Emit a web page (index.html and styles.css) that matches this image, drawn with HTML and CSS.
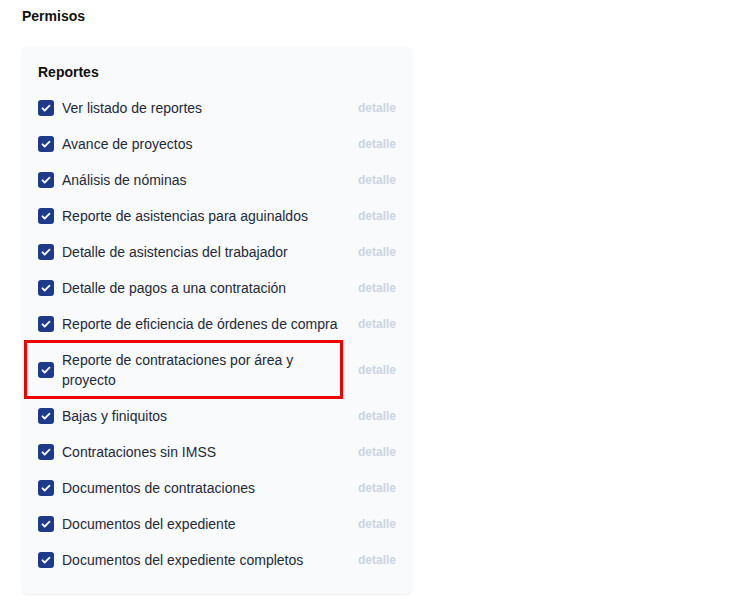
FILE: index.html
```html
<!DOCTYPE html>
<html lang="es">
<head>
    <meta charset="UTF-8">
    <title>Permisos</title>
    <link rel="stylesheet" href="styles.css">
</head>
<body>
    <div class="page">
        <h2 class="title">Permisos</h2>

        <div class="card">
            <h3 class="group-title">Reportes</h3>

            <ul class="perm-list">
                <li class="perm"><span class="check"><svg viewBox="0 0 16 16"><path d="M4.5 8.3l2.2 2.2 4.8-4.8"/></svg></span><span class="label">Ver listado de reportes</span><a class="detail">detalle</a></li>
                <li class="perm"><span class="check"><svg viewBox="0 0 16 16"><path d="M4.5 8.3l2.2 2.2 4.8-4.8"/></svg></span><span class="label">Avance de proyectos</span><a class="detail">detalle</a></li>
                <li class="perm"><span class="check"><svg viewBox="0 0 16 16"><path d="M4.5 8.3l2.2 2.2 4.8-4.8"/></svg></span><span class="label">Análisis de nóminas</span><a class="detail">detalle</a></li>
                <li class="perm"><span class="check"><svg viewBox="0 0 16 16"><path d="M4.5 8.3l2.2 2.2 4.8-4.8"/></svg></span><span class="label">Reporte de asistencias para aguinaldos</span><a class="detail">detalle</a></li>
                <li class="perm"><span class="check"><svg viewBox="0 0 16 16"><path d="M4.5 8.3l2.2 2.2 4.8-4.8"/></svg></span><span class="label">Detalle de asistencias del trabajador</span><a class="detail">detalle</a></li>
                <li class="perm"><span class="check"><svg viewBox="0 0 16 16"><path d="M4.5 8.3l2.2 2.2 4.8-4.8"/></svg></span><span class="label">Detalle de pagos a una contratación</span><a class="detail">detalle</a></li>
                <li class="perm"><span class="check"><svg viewBox="0 0 16 16"><path d="M4.5 8.3l2.2 2.2 4.8-4.8"/></svg></span><span class="label">Reporte de eficiencia de órdenes de compra</span><a class="detail">detalle</a></li>
                <li class="perm highlighted"><span class="check"><svg viewBox="0 0 16 16"><path d="M4.5 8.3l2.2 2.2 4.8-4.8"/></svg></span><span class="label">Reporte de contrataciones por área y proyecto</span><a class="detail">detalle</a></li>
                <li class="perm"><span class="check"><svg viewBox="0 0 16 16"><path d="M4.5 8.3l2.2 2.2 4.8-4.8"/></svg></span><span class="label">Bajas y finiquitos</span><a class="detail">detalle</a></li>
                <li class="perm"><span class="check"><svg viewBox="0 0 16 16"><path d="M4.5 8.3l2.2 2.2 4.8-4.8"/></svg></span><span class="label">Contrataciones sin IMSS</span><a class="detail">detalle</a></li>
                <li class="perm"><span class="check"><svg viewBox="0 0 16 16"><path d="M4.5 8.3l2.2 2.2 4.8-4.8"/></svg></span><span class="label">Documentos de contrataciones</span><a class="detail">detalle</a></li>
                <li class="perm"><span class="check"><svg viewBox="0 0 16 16"><path d="M4.5 8.3l2.2 2.2 4.8-4.8"/></svg></span><span class="label">Documentos del expediente</span><a class="detail">detalle</a></li>
                <li class="perm"><span class="check"><svg viewBox="0 0 16 16"><path d="M4.5 8.3l2.2 2.2 4.8-4.8"/></svg></span><span class="label">Documentos del expediente completos</span><a class="detail">detalle</a></li>
            </ul>
        </div>
    </div>
</body>
</html>
```

FILE: styles.css
```css
* {
    margin: 0;
    padding: 0;
    box-sizing: border-box;
}

body {
    font-family: "Liberation Sans", Arial, sans-serif;
    font-size: 14px;
    line-height: 20px;
    color: #111827;
    background: #ffffff;
}

.page {
    padding: 6px 22px;
    width: 412px;
}

.title {
    font-size: 14px;
    font-weight: bold;
    line-height: 20px;
    color: #111111;
}

.card {
    margin-top: 20px;
    width: 390px;
    padding: 16px;
    background: #f8fafc;
    border-radius: 6px;
    box-shadow: 0 1px 2px rgba(15, 23, 42, 0.08);
}

.group-title {
    font-size: 14px;
    font-weight: bold;
    line-height: 20px;
    color: #111111;
    margin-bottom: 8px;
}

.perm-list {
    list-style: none;
}

.perm {
    position: relative;
    display: flex;
    align-items: center;
    gap: 16px;
    padding: 8px 0;
}

.check {
    flex: none;
    width: 16px;
    height: 16px;
    border-radius: 3px;
    background: #1e3a8a;
    display: flex;
    align-items: center;
    justify-content: center;
    margin-right: -8px;
}

.check svg {
    width: 16px;
    height: 16px;
    fill: none;
    stroke: #ffffff;
    stroke-width: 1.8;
    stroke-linecap: round;
    stroke-linejoin: round;
}

.label {
    flex: 1;
    color: #1f2937;
}

.detail {
    flex: none;
    font-size: 12px;
    font-weight: bold;
    color: #cbd5e1;
}

/* annotation box around the row */
.highlighted::after {
    content: "";
    box-sizing: border-box;
    position: absolute;
    left: -14px;
    top: -2px;
    width: 319px;
    height: 59px;
    border: 3px solid #ee0000;
}
```
